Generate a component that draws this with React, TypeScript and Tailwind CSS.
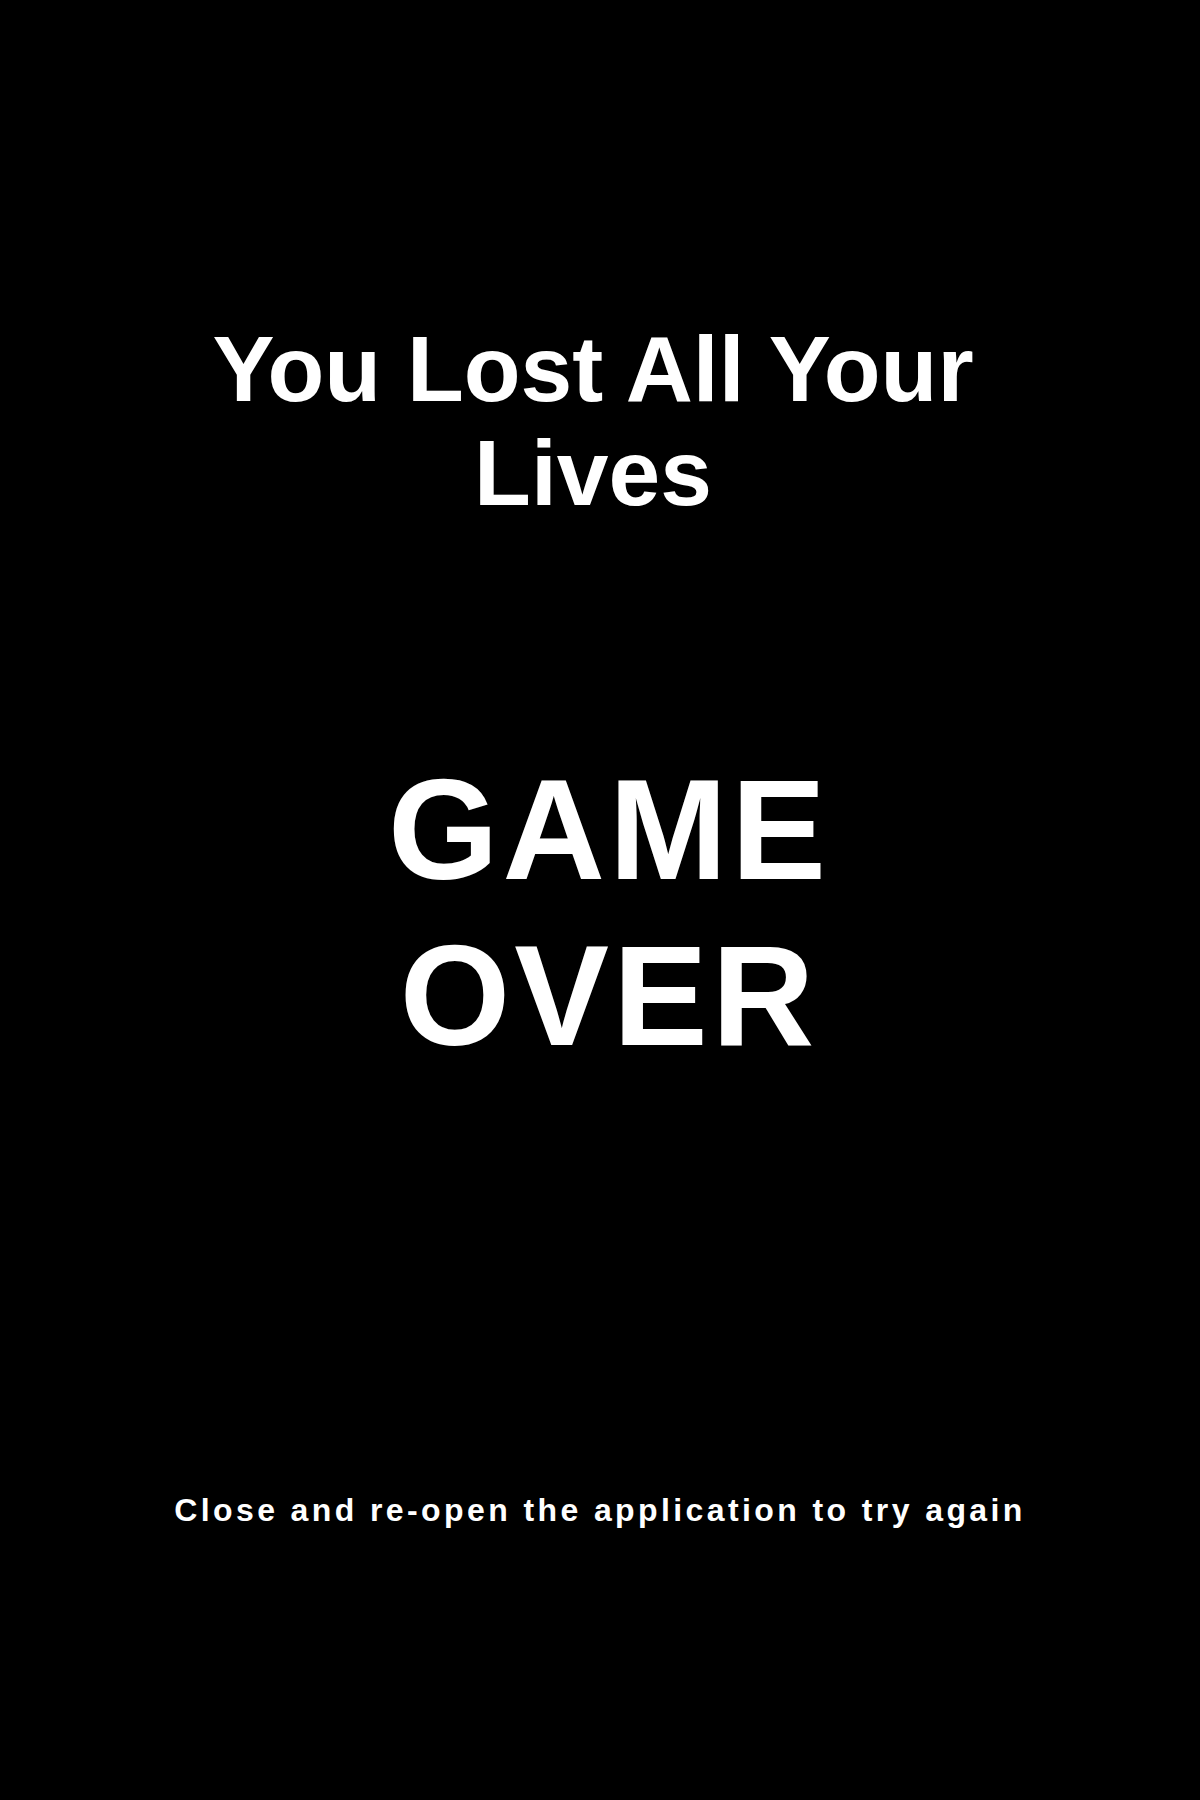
import React from "react";

export default function App() {
  return (
    <div
      className="w-[1200px] h-[1800px] bg-black text-white flex flex-col items-center"
      style={{ fontFamily: '"Liberation Sans", Arial, sans-serif' }}
    >
      <h1 className="mt-[317px] max-w-[920px] pr-[14px] text-center font-bold text-[93px] leading-[104px]">
        You Lost All Your Lives
      </h1>
      <h2 className="mt-[222px] max-w-[520px] pl-[18px] text-center font-bold text-[142px] leading-[166px] tracking-[4px]">
        GAME OVER
      </h2>
      <p className="mt-[411px] text-center font-bold text-[32px] leading-[40px] tracking-[3.4px]">
        Close and re-open the application to try again
      </p>
    </div>
  );
}
